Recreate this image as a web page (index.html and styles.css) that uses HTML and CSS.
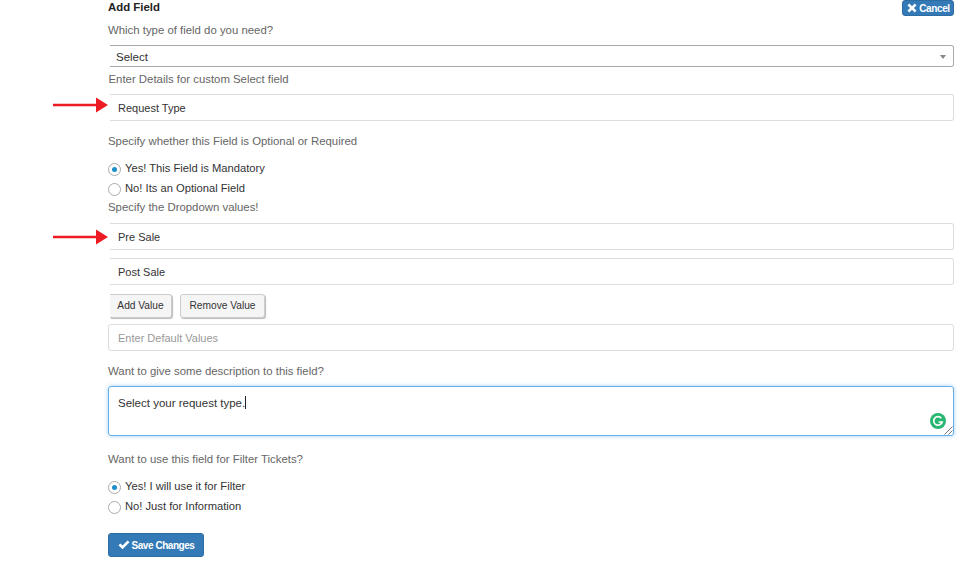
FILE: index.html
```html
<!DOCTYPE html>
<html lang="en">
<head>
<meta charset="utf-8">
<title>Add Field</title>
<link rel="stylesheet" href="styles.css">
</head>
<body>
<div class="arrow arrow-one"><svg width="56" height="16" viewBox="0 0 56 16"><path d="M0 6.8H43V0.5L55 8 43 15.5V9.2H0Z" fill="#ed1c24"/></svg></div>
<div class="arrow arrow-two"><svg width="56" height="16" viewBox="0 0 56 16"><path d="M0 6.8H43V0.5L55 8 43 15.5V9.2H0Z" fill="#ed1c24"/></svg></div>
<form class="form">
  <div class="head">
    <h4 class="title">Add Field</h4>
    <button type="button" class="btn btn-primary btn-cancel"><svg class="ico" width="10" height="10" viewBox="0 0 10 10"><path d="M2.3 0.6 5 3.2 7.7 0.6 9.5 2.4 6.9 5 9.5 7.6 7.7 9.4 5 6.8 2.3 9.4 0.5 7.6 3.1 5 0.5 2.4Z" fill="#fff"/></svg>Cancel</button>
  </div>
  <p class="label l-type">Which type of field do you need?</p>
  <div class="select">Select<span class="caret"></span></div>
  <p class="label l-details">Enter Details for custom Select field</p>
  <div class="input clipped i-name">Request Type</div>
  <p class="label l-required">Specify whether this Field is Optional or Required</p>
  <div class="radios r-first">
    <div class="radio-row"><span class="radio on"></span>Yes! This Field is Mandatory</div>
    <div class="radio-row"><span class="radio"></span>No! Its an Optional Field</div>
  </div>
  <p class="label l-dropdown">Specify the Dropdown values!</p>
  <div class="input clipped i-pre">Pre Sale</div>
  <div class="input clipped i-post">Post Sale</div>
  <div class="actions">
    <button type="button" class="btn btn-default btn-add">Add Value</button>
    <button type="button" class="btn btn-default btn-remove">Remove Value</button>
  </div>
  <div class="input placeholder">Enter Default Values</div>
  <p class="label l-desc">Want to give some description to this field?</p>
  <div class="textarea">
    <span>Select your request type.</span><span class="cursor"></span>
    <span class="grammarly"><svg width="16" height="16" viewBox="0 0 16 16"><circle cx="8" cy="8" r="8" fill="#27b771"/><path d="M11.3 5.1A4.3 4.3 0 1 0 12.2 9H8.6" fill="none" stroke="#fff" stroke-width="1.7"/></svg></span>
    <span class="resize"><svg width="9" height="9" viewBox="0 0 9 9"><path d="M0.5 8.5 8.5 0.5M4.5 8.5 8.5 4.5" stroke="#777" stroke-width="1" fill="none"/></svg></span>
  </div>
  <p class="label l-filter">Want to use this field for Filter Tickets?</p>
  <div class="radios r-second">
    <div class="radio-row"><span class="radio on"></span>Yes! I will use it for Filter</div>
    <div class="radio-row"><span class="radio"></span>No! Just for Information</div>
  </div>
  <button type="button" class="btn btn-primary btn-save"><svg class="ico" width="12" height="10" viewBox="0 0 12 10"><path d="M0.5 5.3 2.4 3.4 4.5 5.5 9.6 0.4 11.5 2.3 4.5 9.3Z" fill="#fff"/></svg>Save Changes</button>
</form>
</body>
</html>
```
FILE: styles.css
```css
* { box-sizing: border-box; }
html, body { margin: 0; padding: 0; background: #fff; }
body {
  position: relative;
  height: 563px;
  overflow: hidden;
  font-family: "Liberation Sans", Arial, sans-serif;
  font-size: 11.5px;
  color: #333;
}
.form { margin-left: 108px; width: 846px; display: flex; flex-direction: column; }
.head { display: flex; justify-content: space-between; align-items: flex-start; height: 16px; }
.title { margin: 1px 0 0; font-size: 11.4px; line-height: 13px; font-weight: 700; color: #222; }
.label { margin: 0; line-height: 14px; font-size: 11.38px; color: #666; }
.btn {
  font-family: inherit;
  font-weight: 400;
  padding: 0;
  cursor: pointer;
  border-radius: 3px;
  display: flex;
  align-items: center;
  justify-content: center;
}
.btn-primary { background: #337ab7; border: 1px solid #2e6da4; color: #fff; }
.btn-default { background: #f5f5f5; border: 1px solid #ccc; color: #333; box-shadow: 1px 1px 1px #bbb; font-size: 10.2px; height: 24px; padding-bottom: 2px; }
.btn-cancel { width: 52px; height: 16px; padding-left: 1px; font-size: 10px; font-weight: 700; letter-spacing: -0.4px; }
.btn-save { width: 96px; height: 24px; padding-left: 0; font-size: 10px; font-weight: 700; letter-spacing: -0.45px; margin-top: 20px; }
.ico { margin-right: 2px; }
.l-type { margin-top: 7px; }
.select {
  margin-top: 8px;
  margin-left: 2px;
  height: 22px;
  border: 1px solid #a9a9a9;
  border-left: 0;
  border-radius: 0 3px 3px 0;
  display: flex;
  align-items: center;
  justify-content: space-between;
  padding: 2px 7px 0 6px;
  color: #333;
}
.caret { width: 0; height: 0; border-left: 3.5px solid transparent; border-right: 3.5px solid transparent; border-top: 4px solid #888; }
.l-details { margin-top: 5px; margin-left: 0.5px; }
.input {
  height: 27px;
  border: 1px solid #ddd;
  border-radius: 3px;
  display: flex;
  align-items: center;
  padding-left: 9px;
  font-size: 11px;
  color: #333;
}
.clipped { margin-left: 2px; border-left: 0; border-radius: 0 3px 3px 0; padding-left: 8px; }
.i-name { margin-top: 8px; }
.i-pre { margin-top: 9px; }
.i-post { margin-top: 8px; }
.placeholder { margin-top: 6px; color: #999; }
.l-required { margin-top: 13px; }
.l-dropdown { margin-top: 5px; }
.l-desc { margin-top: 13px; }
.l-filter { margin-top: 16px; }
.radios { display: flex; flex-direction: column; gap: 6px; font-size: 11.2px; }
.r-first { margin-top: 13px; }
.r-second { margin-top: 13px; }
.radio-row { display: flex; align-items: center; height: 14px; color: #333; }
.radio {
  width: 13px;
  height: 13px;
  margin-right: 4px;
  margin-top: 2px;
  border: 1px solid #aaa;
  border-radius: 50%;
  background: #fff;
  display: flex;
  align-items: center;
  justify-content: center;
  flex: none;
}
.radio.on::after { content: ""; width: 5px; height: 5px; border-radius: 50%; background: #1f8fc9; }
.actions { display: flex; gap: 8px; margin-top: 9px; margin-left: 2px; }
.btn-add { width: 62px; border-left: 0; border-radius: 0 3px 3px 0; }
.btn-remove { width: 85px; }
.textarea {
  position: relative;
  margin-top: 8px;
  height: 50px;
  border: 1px solid #66afe9;
  border-radius: 3px;
  box-shadow: 0 0 4px rgba(102, 175, 233, .6);
  padding: 9px 9px 0;
  line-height: 14px;
  color: #333;
}
.cursor { display: inline-block; width: 1px; height: 13px; background: #222; vertical-align: -2px; }
.grammarly { position: absolute; right: 7px; bottom: 6px; width: 16px; height: 16px; display: block; line-height: 0; }
.resize { position: absolute; right: 0; bottom: 0; width: 9px; height: 9px; line-height: 0; }
.arrow { position: absolute; left: 53px; line-height: 0; }
.arrow-one { top: 97px; }
.arrow-two { top: 229px; }
```
